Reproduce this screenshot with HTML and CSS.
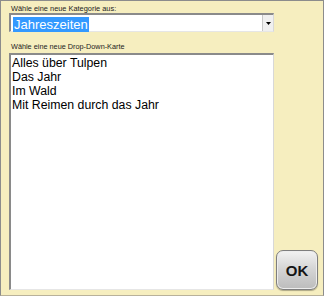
FILE: index.html
```html
<!DOCTYPE html>
<html>
<head>
<meta charset="utf-8">
<link rel="stylesheet" href="styles.css">
</head>
<body>
<div class="dialog">
  <div class="main">
    <div class="label">Wähle eine neue Kategorie aus:</div>
    <div class="select">
      <span class="value"><span class="sel">Jahreszeiten</span></span>
      <span class="arrow"><svg width="5" height="3" viewBox="0 0 5 3"><path d="M0 0H5L2.5 3Z" fill="#000"/></svg></span>
    </div>
    <div class="label label2">Wähle eine neue Drop-Down-Karte</div>
    <div class="list">
      <div class="item">Alles über Tulpen</div>
      <div class="item">Das Jahr</div>
      <div class="item">Im Wald</div>
      <div class="item">Mit Reimen durch das Jahr</div>
    </div>
  </div>
  <div class="side">
    <button class="ok">OK</button>
  </div>
</div>
</body>
</html>
```
FILE: styles.css
```css
html, body {
  margin: 0;
  padding: 0;
}
body {
  width: 324px;
  height: 296px;
  overflow: hidden;
  font-family: "Liberation Sans", Arial, sans-serif;
}
.dialog {
  box-sizing: border-box;
  width: 324px;
  height: 296px;
  background: #f6eebf;
  border: 1px solid #8c8c8c;
  border-bottom-color: #b8b19a;
  display: flex;
  padding: 0 5px 5px 8px;
}
.main {
  width: 265px;
  display: flex;
  flex-direction: column;
}
.label {
  font-size: 7.4px;
  color: #222;
  padding: 4px 0 0 2px;
  height: 8px;
  line-height: 8px;
}
.label2 {
  font-size: 7.3px;
  padding-top: 11px;
  height: 9px;
}
.select {
  margin-top: 0;
  height: 19px;
  box-sizing: border-box;
  background: #fff;
  border-top: 2px solid #8a8a8a;
  border-left: 2px solid #8a8a8a;
  border-right: 1px solid #d8d8d8;
  border-bottom: 1px solid #e6e6e6;
  display: flex;
  align-items: stretch;
}
.value {
  flex: 1;
  padding: 0 0 0 2px;
}
.sel {
  display: inline-block;
  background: #3399ff;
  color: #fff;
  font-size: 13px;
  line-height: 15px;
  padding: 0 1px 0 1px;
}
.arrow {
  width: 10px;
  background: #f0f0f0;
  border-left: 1px solid #c8c8c8;
  display: flex;
  align-items: center;
  justify-content: center;
}
.list {
  margin-top: 1px;
  flex: 1;
  box-sizing: border-box;
  background: #fff;
  border-top: 2px solid #8a8a8a;
  border-left: 2px solid #8a8a8a;
  border-right: 1px solid #d8d8d8;
  border-bottom: 1px solid #e6e6e6;
  padding: 1px 0 0 1px;
}
.item {
  font-size: 12.3px;
  line-height: 14px;
  color: #000;
}
.side {
  flex: 1;
  display: flex;
  align-items: flex-end;
  justify-content: flex-end;
}
.ok {
  width: 42px;
  height: 40px;
  margin-bottom: 0;
  border: 1px solid #7e7e7e;
  border-radius: 7px;
  background: linear-gradient(#f2f2f2, #d6d6d6 45%, #bcbcbc);
  box-shadow: inset 0 0 0 1px #ededed, 0 1px 1px rgba(0,0,0,0.3);
  font-family: "Liberation Sans", Arial, sans-serif;
  font-weight: bold;
  font-size: 15px;
  color: #151515;
  padding: 0;
}
```
